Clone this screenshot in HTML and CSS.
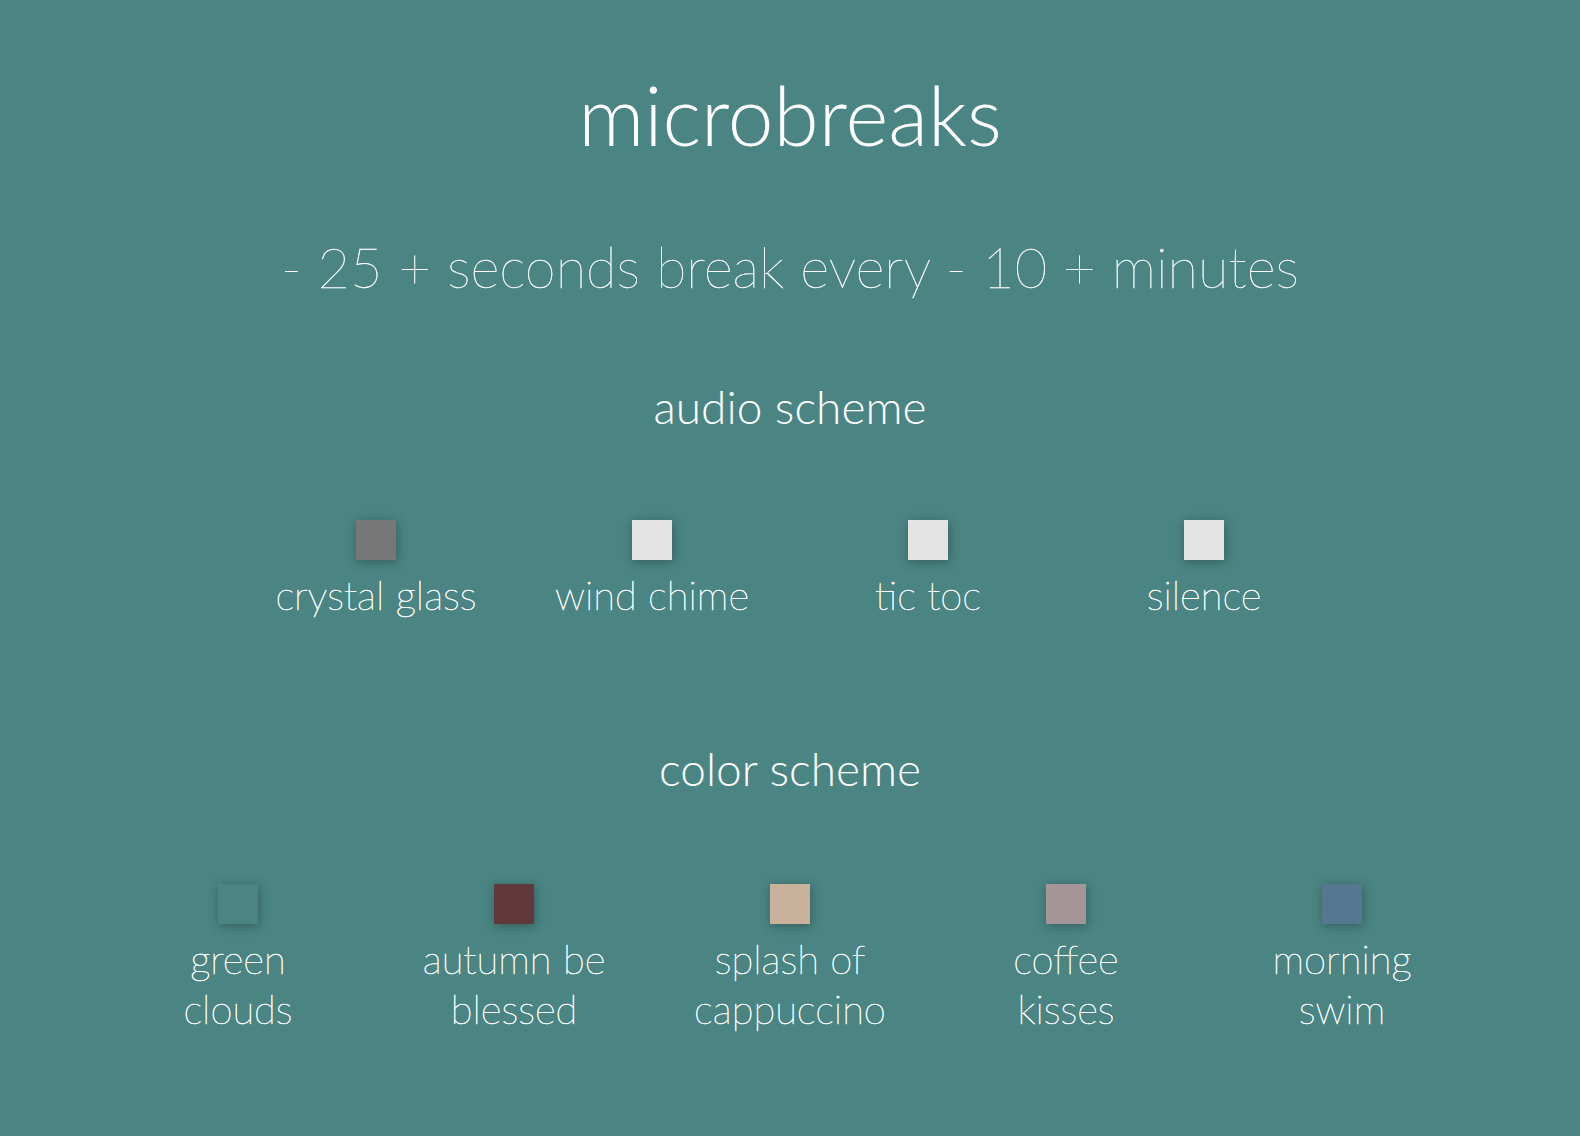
FILE: index.html
```html
<!DOCTYPE html>
<html>
<head>
<meta charset="utf-8">
<link rel="stylesheet" href="styles.css">
</head>
<body>
<main class="app">
  <h1 class="title">microbreaks</h1>
  <div class="timing">
    <span class="btn">-</span> <span class="num">25</span> <span class="btn">+</span> seconds break every <span class="btn">-</span> <span class="num">10</span> <span class="btn">+</span> minutes
  </div>
  <h2 class="heading heading-audio">audio scheme</h2>
  <div class="options options-audio">
    <div class="option"><span class="swatch" style="background:#777777"></span><span class="label">crystal glass</span></div>
    <div class="option"><span class="swatch" style="background:#e3e3e3"></span><span class="label">wind chime</span></div>
    <div class="option"><span class="swatch" style="background:#e3e3e3"></span><span class="label">tic toc</span></div>
    <div class="option"><span class="swatch" style="background:#e3e3e3"></span><span class="label">silence</span></div>
  </div>
  <h2 class="heading heading-color">color scheme</h2>
  <div class="options options-color">
    <div class="option"><span class="swatch" style="background:#4a8583"></span><span class="label">green clouds</span></div>
    <div class="option"><span class="swatch" style="background:#62393a"></span><span class="label">autumn be blessed</span></div>
    <div class="option"><span class="swatch" style="background:#c9b19c"></span><span class="label">splash of cappuccino</span></div>
    <div class="option"><span class="swatch" style="background:#a49696"></span><span class="label">coffee kisses</span></div>
    <div class="option"><span class="swatch" style="background:#557790"></span><span class="label">morning swim</span></div>
  </div>
</main>
</body>
</html>
```
FILE: styles.css
```css
html, body {
  margin: 0;
  padding: 0;
}
body {
  background: #4a8583;
  color: #ffffff;
  font-family: Lato, "Liberation Sans", sans-serif;
  min-height: 1136px;
}
.app {
  display: flex;
  flex-direction: column;
  align-items: center;
  padding-top: 64px;
}
.title {
  margin: 0;
  font-weight: 300;
  font-size: 82px;
  line-height: 100px;
}
.timing {
  margin-top: 68px;
  font-weight: 200;
  font-size: 56px;
  line-height: 70px;
  color: #ffffff;
  -webkit-text-stroke: 0.35px #ffffff;
}
.heading {
  margin: 0;
  font-weight: 300;
  font-size: 46px;
  line-height: 60px;
}
.heading-audio {
  margin-top: 75px;
}
.heading-color {
  margin-top: 119px;
}
.options {
  display: flex;
  justify-content: center;
}
.options-audio {
  margin-top: 83px;
}
.options-color {
  margin-top: 85px;
}
.option {
  width: 204px;
  padding: 0 36px;
  display: flex;
  flex-direction: column;
  align-items: center;
  text-align: center;
}
.swatch {
  display: block;
  width: 40px;
  height: 40px;
  box-shadow: 1px 2px 10px rgba(0, 0, 0, 0.3);
}
.label {
  margin-top: 10px;
  font-weight: 200;
  font-size: 40px;
  line-height: 50px;
  color: #ffffff;
  -webkit-text-stroke: 0.6px #ffffff;
}
```
